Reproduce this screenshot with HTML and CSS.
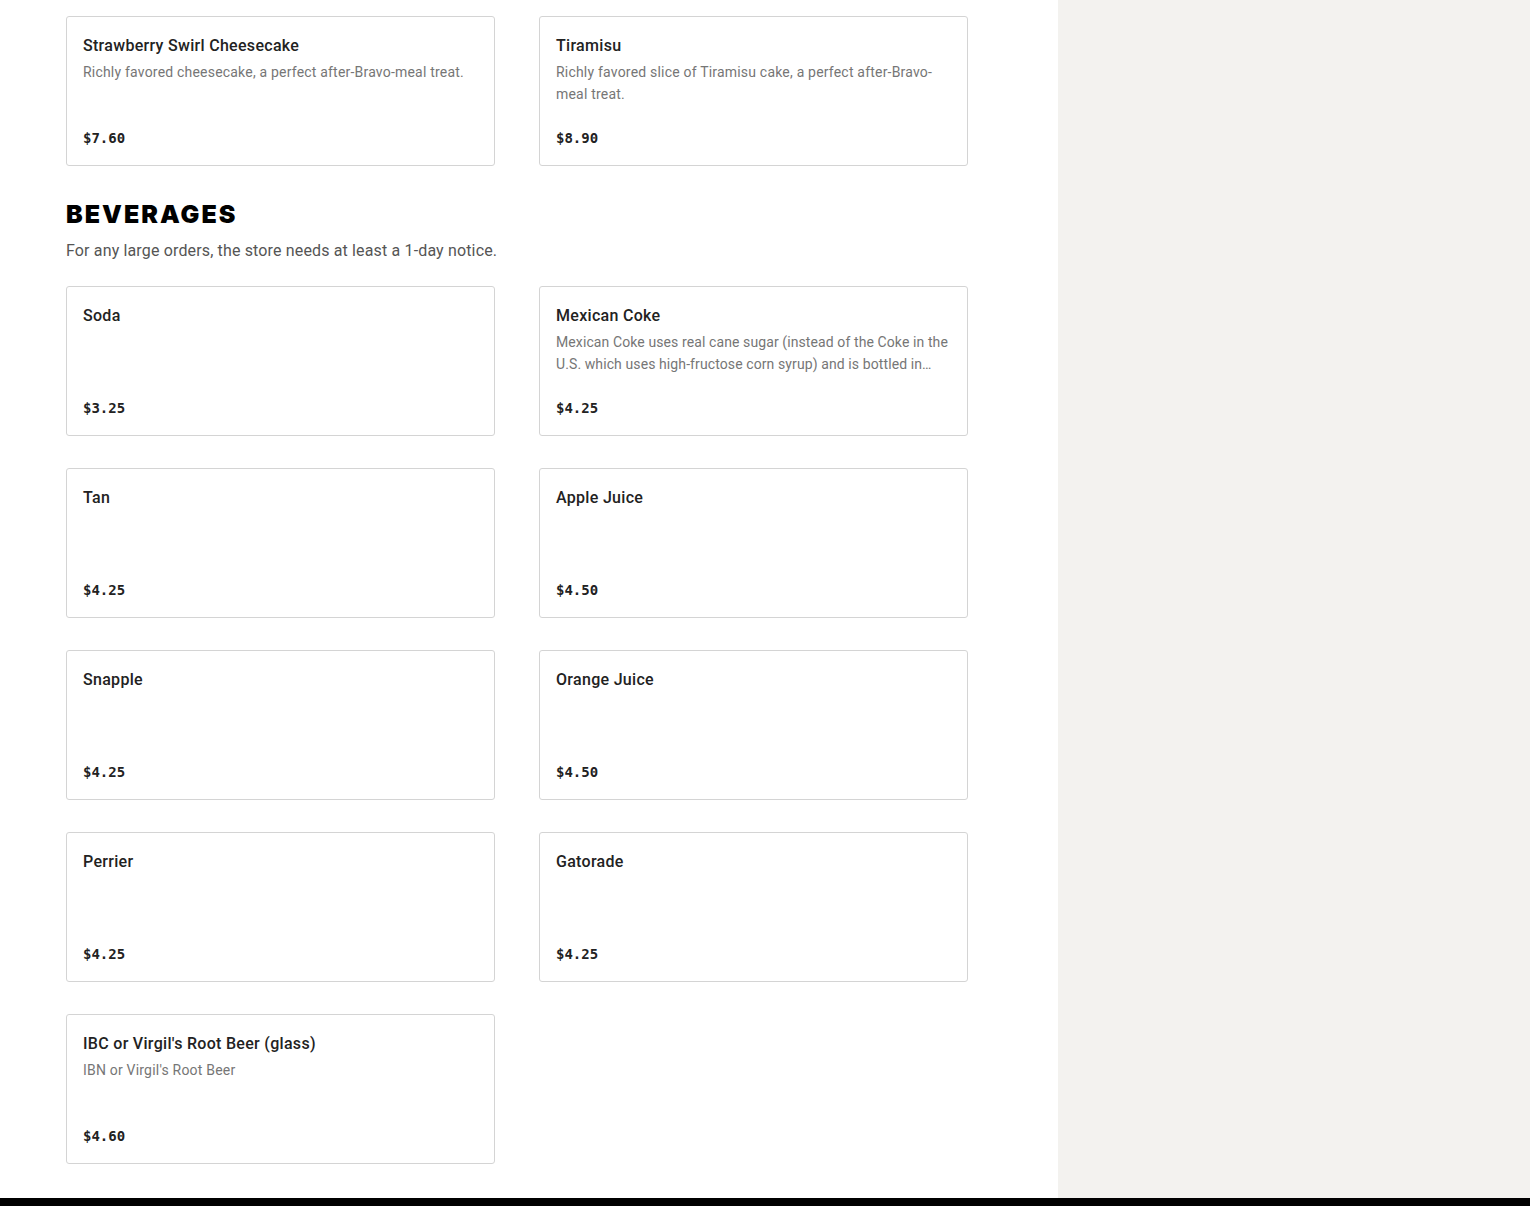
FILE: index.html
```html
<!DOCTYPE html>
<html lang="en">
<head>
<meta charset="utf-8">
<title>Menu</title>
<link rel="stylesheet" href="styles.css">
</head>
<body>
<div class="page">
  <main class="menu">
    <div class="grid">
      <div class="card">
        <div class="card-title">Strawberry Swirl Cheesecake</div>
        <div class="card-desc">Richly favored cheesecake, a perfect after-Bravo-meal treat.</div>
        <div class="card-price">$7.60</div>
      </div>
      <div class="card">
        <div class="card-title">Tiramisu</div>
        <div class="card-desc">Richly favored slice of Tiramisu cake, a perfect after-Bravo-meal treat.</div>
        <div class="card-price">$8.90</div>
      </div>
    </div>

    <section class="section">
      <h2 class="section-title">BEVERAGES</h2>
      <p class="section-note">For any large orders, the store needs at least a 1-day notice.</p>
      <div class="grid">
        <div class="card">
          <div class="card-title">Soda</div>
          <div class="card-price">$3.25</div>
        </div>
        <div class="card">
          <div class="card-title">Mexican Coke</div>
          <div class="card-desc card-desc-tight">Mexican Coke uses real cane sugar (instead of the Coke in the<br>U.S. which uses high-fructose corn syrup) and is bottled in…</div>
          <div class="card-price">$4.25</div>
        </div>
        <div class="card">
          <div class="card-title">Tan</div>
          <div class="card-price">$4.25</div>
        </div>
        <div class="card">
          <div class="card-title">Apple Juice</div>
          <div class="card-price">$4.50</div>
        </div>
        <div class="card">
          <div class="card-title">Snapple</div>
          <div class="card-price">$4.25</div>
        </div>
        <div class="card">
          <div class="card-title">Orange Juice</div>
          <div class="card-price">$4.50</div>
        </div>
        <div class="card">
          <div class="card-title">Perrier</div>
          <div class="card-price">$4.25</div>
        </div>
        <div class="card">
          <div class="card-title">Gatorade</div>
          <div class="card-price">$4.25</div>
        </div>
        <div class="card">
          <div class="card-title">IBC or Virgil's Root Beer (glass)</div>
          <div class="card-desc">IBN or Virgil's Root Beer</div>
          <div class="card-price">$4.60</div>
        </div>
      </div>
    </section>
  </main>
  <aside class="side"></aside>
</div>
<footer class="footer"></footer>
</body>
</html>
```

FILE: styles.css
```css
* { box-sizing: border-box; }
html, body { margin: 0; padding: 0; }
body {
  font-family: "Roboto", "Liberation Sans", sans-serif;
  color: #222;
  background: #fff;
}
.page {
  display: flex;
  align-items: stretch;
}
.menu {
  width: 1058px;
  flex: 0 0 1058px;
  padding: 16px 0 34px 66px;
  background: #fff;
}
.side {
  flex: 1;
  background: #f3f2ef;
}
.grid {
  display: grid;
  grid-template-columns: 429px 429px;
  column-gap: 44px;
  row-gap: 32px;
}
.card {
  height: 150px;
  border: 1px solid #d4d4d4;
  border-radius: 3px;
  padding: 16px;
  display: flex;
  flex-direction: column;
  background: #fff;
}
.card-title {
  padding-top: 1px;
  font-size: 16px;
  line-height: 24px;
  font-weight: 500;
  letter-spacing: 0.3px;
  color: #222;
  margin-bottom: 3px;
}
.card-desc {
  font-size: 14px;
  line-height: 22px;
  letter-spacing: 0.2px;
  color: #767676;
}
.card-desc-tight {
  letter-spacing: 0.1px;
  white-space: nowrap;
}
.card-price {
  margin-top: auto;
  font-family: "DejaVu Sans Mono", "Liberation Mono", monospace;
  font-weight: 700;
  font-size: 14px;
  line-height: 22px;
  color: #222;
}
.section-title {
  margin: 30px 0 0;
  font-family: "Inter", "Liberation Sans", sans-serif;
  font-weight: 900;
  font-size: 25px;
  line-height: 36px;
  letter-spacing: 2px;
  color: #000;
}
.section-note {
  margin: 7px 0 23px;
  font-size: 16px;
  line-height: 24px;
  letter-spacing: 0.15px;
  color: #555;
}
.footer {
  height: 8px;
  background: #000;
}
```
